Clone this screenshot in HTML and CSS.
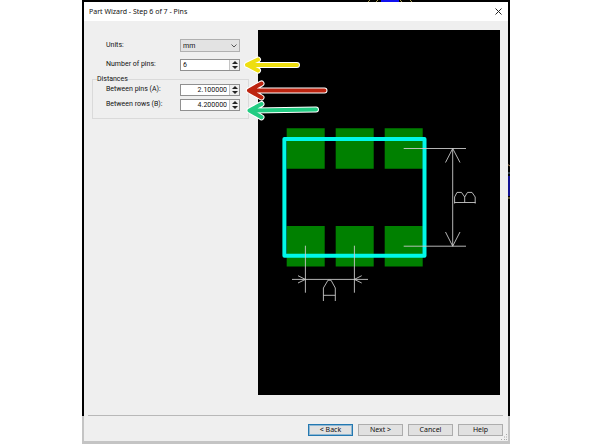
FILE: index.html
```
<!DOCTYPE html>
<html lang="en">
<head>
<meta charset="utf-8">
<title>Part Wizard</title>
<link rel="stylesheet" href="styles.css">
</head>
<body>
<div class="workspace">
  <svg class="trace trace-top" viewBox="0 0 46 2" aria-hidden="true"><path d="M0 2L2 0M8 2L10 0M34 2L32 0M44 2L42 0" stroke="#a59a50"/><path d="M13 0h18v2h-18z" fill="#1010f0"/></svg>
  <svg class="trace trace-side" viewBox="0 0 3 38" aria-hidden="true"><path d="M0 2l3 2" stroke="#b08a60"/><path d="M0 11h3" stroke="#6080a0"/><path d="M0 14h3v20h-3z" fill="#101090"/><path d="M0 36h3" stroke="#b09a50"/></svg>
  <main class="dialog">
    <header class="titlebar">
      <h1 class="title">Part Wizard - Step 6 of 7 - Pins</h1>
      <button class="close" type="button" aria-label="Close"><svg viewBox="0 0 7 7"><path d="M.5 .5l6 6M6.5 .5l-6 6" stroke="#222" fill="none"/></svg></button>
    </header>
    <form class="content">
      <div class="settings">
        <div class="row row-units">
          <label for="units">Units:</label>
          <div class="select-wrap">
            <select id="units"><option>mm</option></select>
            <svg class="chevron" viewBox="0 0 6 4" aria-hidden="true"><path d="M.5 .5L3 3L5.5 .5" stroke="#555" fill="none"/></svg>
          </div>
        </div>
        <div class="row">
          <label for="count">Number of pins:</label>
          <div class="spin">
            <input id="count" type="text" value="6">
            <div class="steps"><button type="button" class="up" aria-label="More pins"></button><button type="button" class="down" aria-label="Fewer pins"></button></div>
          </div>
        </div>
        <fieldset class="distances">
          <legend>Distances</legend>
          <div class="row">
            <label for="pins">Between pins (A):</label>
            <div class="spin number">
              <input id="pins" type="text" value="2.100000">
              <div class="steps"><button type="button" class="up" aria-label="Increase A"></button><button type="button" class="down" aria-label="Decrease A"></button></div>
            </div>
          </div>
          <div class="row">
            <label for="rows">Between rows (B):</label>
            <div class="spin number">
              <input id="rows" type="text" value="4.200000">
              <div class="steps"><button type="button" class="up" aria-label="Increase B"></button><button type="button" class="down" aria-label="Decrease B"></button></div>
            </div>
          </div>
        </fieldset>
      </div>
      <div class="preview">
        <svg viewBox="258 30 242 365" preserveAspectRatio="xMidYMid meet" role="img" aria-label="Footprint preview">
          <g fill="#008000">
            <path d="M286.7 128.3h38v40.4h-38zM335.7 128.3h38v40.4h-38zM384.7 128.3h38v40.4h-38z"/>
            <path d="M286.7 226h38v40.4h-38zM335.7 226h38v40.4h-38zM384.7 226h38v40.4h-38z"/>
          </g>
          <rect x="284.4" y="139" width="140.1" height="116.8" fill="none" stroke="#00f8e8" stroke-width="4" stroke-linejoin="round"/>
          <g fill="none" stroke="#c8c8c8" stroke-width=".9">
            <path d="M403.7 148.5H466M403.7 246.2H466M452.7 148.5V246.2M445.5 162.5L452.7 148.5L460 162.5M445.5 232L452.7 246.2L460 232"/>
            <path d="M305.4 245.7V292.7M354.4 245.7V292.7M292 279.4H368M298 275.7L305.4 279.4L298 283M361.7 275.7L354.4 279.4L361.7 283"/>
            <path d="M323.4 301V288L328 280.2H331L335.3 288V301M323.4 295.3H335.3"/>
            <path d="M454.4 202.5H475.5M454.6 203.5V197L457 192.4H461.5L464.7 197V202.5M464.7 197L467.5 192.4H472L475.2 197V203.5"/>
          </g>
        </svg>
      </div>
    </form>
    <footer class="actions">
      <button class="action primary" type="button">&lt; Back</button>
      <button class="action" type="button">Next &gt;</button>
      <button class="action" type="button">Cancel</button>
      <button class="action" type="button">Help</button>
    </footer>
    <svg class="grip" viewBox="0 0 7 7" aria-hidden="true"><path d="M5 0h1v1h-1zM3 2.500h1v1h-1zM5 2.500h1v1h-1zM0 5h1v1h-1zM3 5h1v1h-1zM5 5h1v1h-1z" fill="#aaa"/></svg>
    <svg class="callouts" viewBox="242 54 88 68" aria-hidden="true">
      <g fill="none" stroke-linecap="round" stroke-linejoin="round">
        <g stroke="#fff" stroke-width="6"><path d="M297 65H247M258 59.500L247 64.700L258 70.500"/><path d="M324.500 90.500H249M261.500 83.500L249 90.400L261.500 97.500"/><path d="M316 109.400L249.500 110.500M261.500 104L249.500 110.500L261.500 117.300"/></g>
        <g stroke-width="4"><path stroke="#eede10" d="M297 65H247M258 59.500L247 64.700L258 70.500"/><path stroke="#bd2410" d="M324.500 90.500H249M261.500 83.500L249 90.400L261.500 97.500"/><path stroke="#22cc82" d="M316 109.400L249.500 110.500M261.500 104L249.500 110.500L261.500 117.300"/></g>
      </g>
    </svg>
  </main>
</div>
</body>
</html>
```
FILE: styles.css
```
* { box-sizing: border-box; }

body {
  margin: 0;
  background: #fff;
  color: #111;
  font: 7px/10px "Noto Sans", "Open Sans", sans-serif;
}

button, input, select { font: inherit; color: inherit; margin: 0; }

.workspace {
  position: relative;
  display: flex;
  height: 100vh;
  margin: 0 82px;
  padding: 2px 2px 3px;
  background: linear-gradient(#000 416px, #c4c4c4 416px);
}

.trace { position: absolute; }
.trace-top { width: 46px; height: 2px; left: 286px; top: 0; }
.trace-side { width: 3px; height: 38px; right: 0; top: 162px; }

.dialog {
  position: relative;
  flex: 1;
  display: flex;
  flex-direction: column;
  min-width: 0;
  background: #efefef;
}

.titlebar {
  display: flex;
  align-items: center;
  justify-content: space-between;
  height: 19px;
  padding: 0 6px 0 5px;
  background: #fff;
}

.title { margin: 0; font-size: 7px; font-weight: 400; }

.close { padding: 0; border: 0; background: none; width: 7px; height: 7px; }
.close svg { display: block; width: 7px; height: 7px; }

.content {
  flex: 1;
  display: flex;
  min-height: 0;
  padding: 9px 8px 0;
}

.settings {
  width: 166px;
  padding-top: 9px;
  font-family: Roboto, "Liberation Sans", sans-serif;
}

.row {
  display: grid;
  grid-template-columns: 74px 60px;
  height: 15px;
  padding-left: 14px;
}

.row-units { height: 20px; }
.row-units label { line-height: 13px; }

.select-wrap { position: relative; height: 13px; }

select {
  appearance: none;
  display: block;
  width: 100%;
  height: 13px;
  padding: 0 2px;
  border: 1px solid #b0b0b0;
  border-radius: 0;
  background: #e3e3e3;
}

.chevron { position: absolute; right: 3px; top: 5px; width: 6px; height: 4px; }

.spin {
  display: flex;
  height: 12px;
  border: 1px solid #909090;
  background: #fff;
}

.spin input {
  flex: 1;
  min-width: 0;
  padding: 0 2px;
  border: 0;
  background: none;
}

.number input { text-align: right; }

.steps {
  display: flex;
  flex-direction: column;
  width: 10px;
  border-left: 1px solid #c4c4c4;
  background: #efefef;
}

.steps button {
  flex: 1;
  display: flex;
  justify-content: center;
  align-items: center;
  min-height: 0;
  padding: 0;
  border: 0;
  background: none;
}

.steps button::before {
  content: "";
  border: 0 solid transparent;
  border-width: 0 3px;
}

.steps .up::before { border-bottom: 3px solid #222; }
.steps .down::before { border-top: 3px solid #222; }

.distances {
  width: 157px;
  margin: 0;
  padding: 0 0 4px;
  border: 1px solid #dadada;
}

.distances .row { padding-left: 13px; }

legend { height: 10px; margin-left: 4px; padding: 0; }

.preview { flex: 1; min-width: 0; background: #000; }
.preview svg { display: block; width: 100%; height: 100%; }

.actions {
  display: flex;
  justify-content: flex-end;
  gap: 5px;
  margin: 20px 5px 0 4px;
  padding: 8px 0 5px;
  border-top: 1px solid #b8b8b8;
}

.action {
  width: 45px;
  height: 12px;
  padding: 0;
  border: 1px solid #adadad;
  background: #e1e1e1;
  line-height: 10px;
}

.primary { border-color: #2478b0; box-shadow: inset 0 0 0 1px #8fb8d4; }

.grip { position: absolute; right: 0; bottom: 0; width: 7px; height: 7px; }

.callouts {
  position: absolute;
  left: 158px;
  top: 52px;
  width: 88px;
  height: 68px;
  pointer-events: none;
}
```
